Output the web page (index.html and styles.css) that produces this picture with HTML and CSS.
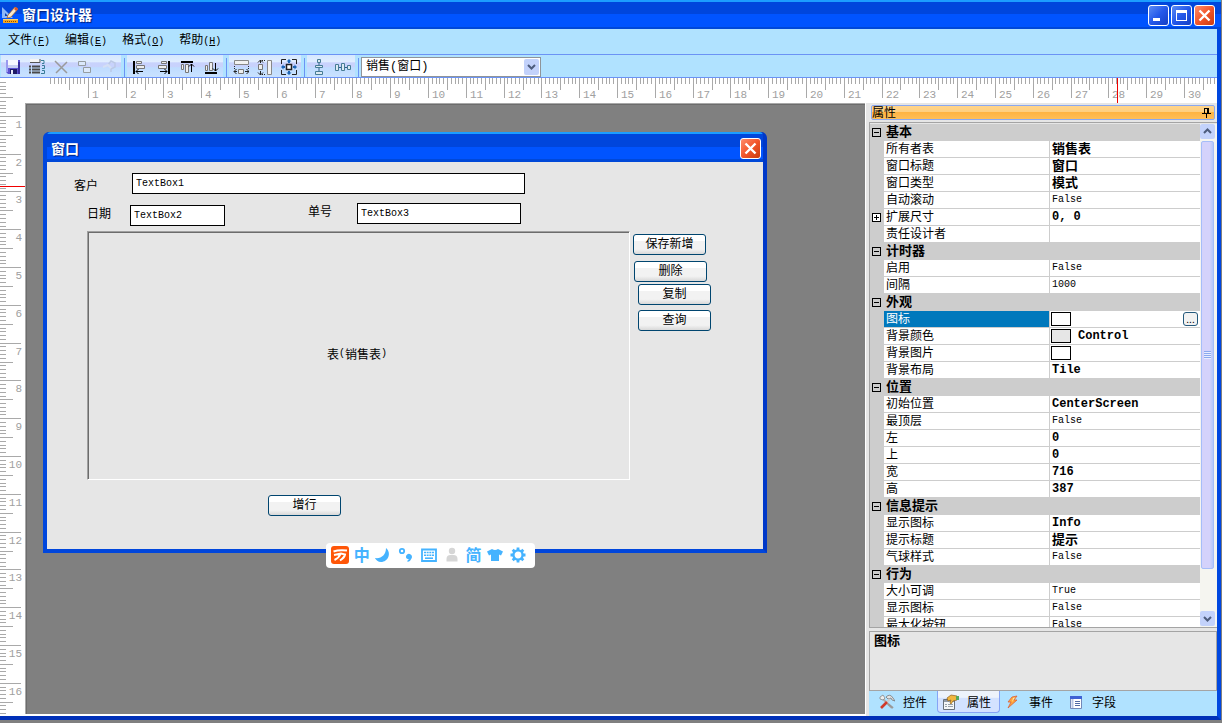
FILE: index.html
```html
<!DOCTYPE html>
<html lang="zh-CN">
<head>
<meta charset="utf-8">
<title>窗口设计器</title>
<link rel="stylesheet" href="styles.css">
</head>
<body>
<div class="app">
  <header class="titlebar">
    <svg class="title-icon" viewBox="0 0 16 16"><path d="M0 0l11 11H0z" fill="#8db8f8"/><path d="M3 6v3h3z" fill="#0a3fb0"/><path d="M5 11l1-3 7-8 3 2-7 8z" fill="#f8e8c8" stroke="#a85a1c" stroke-width=".7"/><path d="M12 2l2-2 2 2-2 2z" fill="#e0552c"/><path d="M1 12h15v4H1z" fill="#f5a623"/><path d="M1 12h15v1H1z" fill="#ffd56b"/><path d="M3.500 14v1M5.500 14v1M7.500 14v1M9.500 14v1M11.500 14v1M13.500 14v1" stroke="#8a4b00"/></svg>
    <h1 class="title-text">窗口设计器</h1>
    <div class="controls">
      <button class="ctl" aria-label="最小化"><svg viewBox="0 0 19 19"><path d="M4 12h7v3H4z" fill="#fff"/></svg></button>
      <button class="ctl" aria-label="最大化"><svg viewBox="0 0 19 19"><path d="M4 4h11v11H4zM5 7v7h9V7z" fill="#fff" fill-rule="evenodd"/></svg></button>
      <button class="ctl ctl-close" aria-label="关闭"><svg viewBox="0 0 19 19"><path d="M4.500 4.500l10 10M14.500 4.500l-10 10" stroke="#fff" stroke-width="2.400"/></svg></button>
    </div>
  </header>
  <div class="frame">
    <nav class="menubar">
      <button class="menu">文件<span class="latin">(<u>F</u>)</span></button>
      <button class="menu">编辑<span class="latin">(<u>E</u>)</span></button>
      <button class="menu">格式<span class="latin">(<u>O</u>)</span></button>
      <button class="menu">帮助<span class="latin">(<u>H</u>)</span></button>
    </nav>
    <div class="toolbar">
      <div class="strip">
        <button class="tool" aria-label="保存"><svg viewBox="0 0 16 16"><path d="M1 1h14v14H3l-2-2z" fill="#5a50d0"/><path d="M1 1h2v12H1z" fill="#9a9af0"/><path d="M13 3h2v12h-2z" fill="#3a2fa0"/><path d="M3 1h10v8H3z" fill="#f7f8ff"/><path d="M3 6h10v3H3z" fill="#c9cff2"/><path d="M5 10h7v5H5z" fill="#1d1a66"/><path d="M6 11h2v4H6z" fill="#e8e8f8"/></svg></button>
        <button class="tool" aria-label="标签顺序"><svg viewBox="0 0 16 16"><path d="M1 0h9v3H1z" fill="#f4f4f4"/><path d="M1 3.500h10V0" stroke="#555" fill="none"/><path d="M0 7.500h2M3 7.500h8M0 10.500h2M3 10.500h8M0 13.500h2M3 13.500h8" stroke="#4a4a4a" stroke-width="2"/><path d="M12 1.500h3v3h-2M13 6.500h2.500v3H13M13 11.500h2.500v3H12" stroke="#397c99" fill="none"/></svg></button>
        <button class="tool" aria-label="删除"><svg viewBox="0 0 16 16"><path d="M2 2l12 12M14 3L3 14" stroke="#9a9a9a" stroke-width="1.500"/></svg></button>
        <button class="tool" aria-label="层次"><svg viewBox="0 0 16 16"><path d="M1.500 2.500h7v4h-7zM6.500 8.500h7v5h-7z" fill="#dbe9fb" stroke="#959da0"/><path d="M3 8v3h2M10 4h2v3" stroke="#d5e4f4" fill="none"/></svg></button>
        <button class="tool" aria-label="帮助"><svg viewBox="0 0 16 16"><path d="M7 6l3-4 4 2v4l-4 2v3" stroke="#bcc9e6" fill="none" stroke-width="1.500"/><path d="M2 8l5-2 3 3" stroke="#d4dff4" fill="none" stroke-width="2"/></svg></button>
      </div>
      <i class="sep"></i>
      <div class="strip">
        <button class="tool" aria-label="左对齐"><svg viewBox="0 0 16 16"><path d="M3 2v13" stroke="#000" stroke-width="2"/><path d="M5.500 2.500h5v2h-5zM5.500 6.500h8v3h-8z" fill="#eee" stroke="#777"/><path d="M5 12.500h7M7.500 10l-2.500 2.500 2.500 2.500" stroke="#000" fill="none"/></svg></button>
        <button class="tool" aria-label="右对齐"><svg viewBox="0 0 16 16"><path d="M14 2v13" stroke="#000" stroke-width="2"/><path d="M6.500 2.500h5v2h-5zM3.500 6.500h8v3h-8z" fill="#eee" stroke="#777"/><path d="M5 12.500h7M9.500 10l2.500 2.500-2.500 2.500" stroke="#000" fill="none"/></svg></button>
        <button class="tool" aria-label="顶端对齐"><svg viewBox="0 0 16 16"><path d="M2 3h12" stroke="#000" stroke-width="2"/><path d="M2.500 5.500h2v5h-2zM6.500 5.500h3v8h-3z" fill="#eee" stroke="#777"/><path d="M12.500 5v8M10 7.500L12.500 5 15 7.500" stroke="#000" fill="none"/></svg></button>
        <button class="tool" aria-label="底端对齐"><svg viewBox="0 0 16 16"><path d="M2 14h12" stroke="#000" stroke-width="2"/><path d="M2.500 6.500h2v5h-2zM6.500 3.500h3v8h-3z" fill="#eee" stroke="#777"/><path d="M12.500 4v8M10 9.500l2.500 2.500L15 9.500" stroke="#000" fill="none"/></svg></button>
      </div>
      <i class="sep"></i>
      <div class="strip">
        <button class="tool" aria-label="相同宽度"><svg viewBox="0 0 16 16"><path d="M1.500 1.500h14v4h-14z" fill="#f2f2f2" stroke="#888"/><path d="M1.500 7v3M15.500 7v3" stroke="#222" stroke-dasharray="1 1"/><path d="M5.500 10.500h5v4h-5z" fill="#eee" stroke="#777"/><path d="M1 12.500h3M12 12.500h4M3.500 10L1 12.500 3.500 15M13.500 10l2.500 2.500-2.500 2.500" stroke="#222" fill="none"/></svg></button>
        <button class="tool" aria-label="相同高度"><svg viewBox="0 0 16 16"><path d="M10.500 1.500h4v14h-4z" fill="#f2f2f2" stroke="#888"/><path d="M5 1.500h4M5 15.500h4" stroke="#222" stroke-dasharray="1 1"/><path d="M1.500 5.500h4v5h-4z" fill="#eee" stroke="#777"/><path d="M3.500 1v3M3.500 12v4M1 3.500L3.500 1 6 3.500M1 13.500L3.500 16 6 13.500" stroke="#222" fill="none"/></svg></button>
        <button class="tool" aria-label="相同大小"><svg viewBox="0 0 16 16"><path d="M5 .5H.5V5M11 .5h4.500V5M.5 11v4.500H5M15.500 11v4.500H11" fill="none" stroke="#222"/><path d="M5.500 5.500h5v5h-5z" fill="#fff" stroke="#222" stroke-width="1.500"/><path d="M8 0l2.500 2.500H9V4H7V2.500H5.500zM8 16l2.500-2.500H9V12H7v1.500H5.500zM0 8l2.500-2.500V7H4v2H2.500v1.500zM16 8l-2.500-2.500V7H12v2h1.500v1.500z" fill="#1b65b5"/></svg></button>
      </div>
      <i class="sep"></i>
      <div class="strip">
        <button class="tool" aria-label="垂直居中"><svg viewBox="0 0 16 16"><path d="M8 0v16" stroke="#2f5f82"/><path d="M6.500.5h3v3h-3zM4.500 6.500h7v2h-7zM4.500 12.500h7v3h-7z" fill="#dceaf2" stroke="#467c95"/></svg></button>
        <button class="tool" aria-label="水平居中"><svg viewBox="0 0 16 16"><path d="M0 8.500h16" stroke="#2f5f82"/><path d="M.5 5.500h3v6h-3zM6.500 4.500h3v7h-3zM12.500 6.500h3v4h-3z" fill="#dceaf2" stroke="#467c95"/></svg></button>
      </div>
      <i class="sep"></i>
      <div class="combo">
        <select class="combo-select" aria-label="窗口选择"><option>销售(窗口)</option></select>
        <svg class="combo-arrow" viewBox="0 0 15 16"><path d="M4 6l3.500 3.500L11 6" fill="none" stroke="#4d5c7d" stroke-width="2"/></svg>
      </div>
    </div>
    <main class="work">
      <svg class="ruler-v" id="ruler-v"></svg>
      <div class="stage">
        <svg class="ruler-h" id="ruler-h"></svg>
        <div class="stage-row">
          <section class="canvas">
            <div class="form">
              <div class="form-title">
                <h2 class="form-caption">窗口</h2>
                <button class="ctl ctl-close" aria-label="关闭窗口"><svg viewBox="0 0 19 19"><path d="M4.500 4.500l10 10M14.500 4.500l-10 10" stroke="#fff" stroke-width="2.400"/></svg></button>
              </div>
              <div class="form-body">
                <label class="item lab-customer" for="t1">客户</label>
                <input class="item box-customer" id="t1" value="TextBox1">
                <label class="item lab-date" for="t2">日期</label>
                <input class="item box-date" id="t2" value="TextBox2">
                <label class="item lab-number" for="t3">单号</label>
                <input class="item box-number" id="t3" value="TextBox3">
                <div class="item sheet">表<span class="latin">(</span>销售表<span class="latin">)</span></div>
                <button class="item btn btn-save">保存新增</button>
                <button class="item btn btn-delete">删除</button>
                <button class="item btn btn-copy">复制</button>
                <button class="item btn btn-query">查询</button>
                <button class="item btn btn-row">增行</button>
              </div>
            </div>
            <div class="ime">
              <svg class="ime-icon" viewBox="0 0 18 18"><rect width="18" height="18" rx="3" fill="#ff5608"/><path d="M2.500 5.500Q8 3.500 16 4.500M3 9l7-1.500 4 1q-.5 3-5 6M9.500 8Q8 12 3.500 14" fill="none" stroke="#fff" stroke-width="2"/></svg>
              <span class="ime-text">中</span>
              <svg class="ime-icon" viewBox="0 0 18 18"><path d="M12 2c6 5 2 14-5 14-3 0-5-2-6-4 6 1 11-3 11-10z" fill="#45b3ff"/></svg>
              <svg class="ime-icon" viewBox="0 0 18 18"><circle cx="5" cy="5" r="2.200" fill="none" stroke="#45b3ff" stroke-width="1.800"/><path d="M9 11a3 3 0 1 1 5.500 1.500q-1 3-4 3.500v-1.500l1.500-1.500q-3 0-3-2z" fill="#45b3ff"/></svg>
              <svg class="ime-icon" viewBox="0 0 18 18"><path d="M2 3.500h14v11.500H2z" fill="none" stroke="#45b3ff" stroke-width="1.800"/><path d="M4 6.500h10M4 9.200h10" stroke="#45b3ff" stroke-width="1.600" stroke-dasharray="2 .66"/><path d="M5 12.200h8" stroke="#45b3ff" stroke-width="1.600"/></svg>
              <svg class="ime-icon" viewBox="0 0 18 18"><circle cx="9" cy="5" r="3.200" fill="#d6d6d6"/><path d="M3.500 15.500V13q0-4 4-4h3q4 0 4 4v2.500z" fill="#d6d6d6"/></svg>
              <span class="ime-text">简</span>
              <svg class="ime-icon" viewBox="0 0 18 18"><path d="M6 3q3 2 6 0l5 2.500-2 4-2-1V15H5V8.500l-2 1-2-4z" fill="#45b3ff"/></svg>
              <svg class="ime-icon" viewBox="0 0 18 18"><circle cx="9" cy="9" r="4.600" fill="none" stroke="#45b3ff" stroke-width="2.400"/><path d="M9 1.500V5M9 13v3.500M1.500 9H5M13 9h3.500M3.700 3.700l2 2M12.300 12.300l2 2M14.300 3.700l-2 2M3.700 14.300l2-2" stroke="#45b3ff" stroke-width="2.800"/></svg>
            </div>
          </section>
          <aside class="side">
            <div class="side-head"><span>属性</span><svg class="pin" viewBox="0 0 9 11"><path d="M2 1.500h5M2.500 1v5M5.500 1v5M6.500 1v5M0 6.500h9M4.500 7v4" stroke="#000" fill="none"/></svg></div>
            <div class="grid-box">
              <table class="grid">
                <tbody>
                <tr class="cat"><td><button class="exp" aria-label="折叠"></button></td><th colspan="2">基本</th></tr>
                <tr><td></td><td>所有者表</td><td class="b">销售表</td></tr>
                <tr><td></td><td>窗口标题</td><td class="b">窗口</td></tr>
                <tr><td></td><td>窗口类型</td><td class="b">模式</td></tr>
                <tr><td></td><td>自动滚动</td><td class="v">False</td></tr>
                <tr><td><button class="exp exp-plus" aria-label="展开"></button></td><td>扩展尺寸</td><td class="vb">0, 0</td></tr>
                <tr><td></td><td>责任设计者</td><td></td></tr>
                <tr class="cat"><td><button class="exp" aria-label="折叠"></button></td><th colspan="2">计时器</th></tr>
                <tr><td></td><td>启用</td><td class="v">False</td></tr>
                <tr><td></td><td>间隔</td><td class="v">1000</td></tr>
                <tr class="cat"><td><button class="exp" aria-label="折叠"></button></td><th colspan="2">外观</th></tr>
                <tr class="sel"><td></td><td>图标</td><td class="sw"><i class="swatch"></i><button class="more" aria-label="浏览">...</button></td></tr>
                <tr><td></td><td>背景颜色</td><td class="vb sw"><i class="swatch swatch-gray"></i>Control</td></tr>
                <tr><td></td><td>背景图片</td><td class="sw"><i class="swatch"></i></td></tr>
                <tr><td></td><td>背景布局</td><td class="vb">Tile</td></tr>
                <tr class="cat"><td><button class="exp" aria-label="折叠"></button></td><th colspan="2">位置</th></tr>
                <tr><td></td><td>初始位置</td><td class="vb">CenterScreen</td></tr>
                <tr><td></td><td>最顶层</td><td class="v">False</td></tr>
                <tr><td></td><td>左</td><td class="vb">0</td></tr>
                <tr><td></td><td>上</td><td class="vb">0</td></tr>
                <tr><td></td><td>宽</td><td class="vb">716</td></tr>
                <tr><td></td><td>高</td><td class="vb">387</td></tr>
                <tr class="cat"><td><button class="exp" aria-label="折叠"></button></td><th colspan="2">信息提示</th></tr>
                <tr><td></td><td>显示图标</td><td class="vb">Info</td></tr>
                <tr><td></td><td>提示标题</td><td class="b">提示</td></tr>
                <tr><td></td><td>气球样式</td><td class="v">False</td></tr>
                <tr class="cat"><td><button class="exp" aria-label="折叠"></button></td><th colspan="2">行为</th></tr>
                <tr><td></td><td>大小可调</td><td class="v">True</td></tr>
                <tr><td></td><td>显示图标</td><td class="v">False</td></tr>
                <tr><td></td><td>最大化按钮</td><td class="v">False</td></tr>
                </tbody>
              </table>
              <div class="scroll">
                <button class="scroll-btn" aria-label="向上滚动"><svg viewBox="0 0 15 15"><path d="M4 9l3.500-3.500L11 9" fill="none" stroke="#4d5c7d" stroke-width="2"/></svg></button>
                <div class="track"><div class="thumb"><i class="grip"></i></div></div>
                <button class="scroll-btn" aria-label="向下滚动"><svg viewBox="0 0 15 15"><path d="M4 6l3.500 3.500L11 6" fill="none" stroke="#4d5c7d" stroke-width="2"/></svg></button>
              </div>
            </div>
            <div class="hint">图标</div>
            <div class="tabs">
              <button class="tab"><svg viewBox="0 0 16 16"><path d="M3 4l10 10" stroke="#aaa" stroke-width="2"/><path d="M1 3l3-2 2 3-2 2-3-1z" fill="#eee" stroke="#888" stroke-width=".8"/><path d="M7 3q4-4 7 1l2 3-3-1-1-2-3 1z" fill="#e4e4e4" stroke="#777" stroke-width=".8"/><path d="M11 5L7 9" stroke="#ccc" stroke-width="2"/><path d="M8 8l-6 6" stroke="#d03a2a" stroke-width="2.600"/><path d="M9 10l5 4" stroke="#999" stroke-width="2"/></svg>控件</button>
              <button class="tab tab-on"><svg viewBox="0 0 16 16"><path d="M.5 5.500h11v10H.5z" fill="#f4f6f8" stroke="#68707a"/><path d="M1 6h10v2H1z" fill="#909aa8"/><path d="M2 10h2v1H2zM5 10h5v1H5zM2 12h2v1H2zM5 12h5v1H5z" fill="#98a0a8"/><path d="M4 4l4-3 6 1v4l-4 1-2 3-1-1 1-3-3 1z" fill="#f1b63e" stroke="#8f601e" stroke-width=".7"/><path d="M13 2h3v4h-3z" fill="#55a85c"/></svg>属性</button>
              <button class="tab"><svg viewBox="0 0 16 16"><path d="M7 3l5-1-3 4h3L3 14l3-6H3z" fill="#ffa63b" stroke="#d9603a" stroke-width=".8"/><path d="M8 4l2-.5L7 8z" fill="#ffe9a5"/></svg>事件</button>
              <button class="tab"><svg viewBox="0 0 16 16"><path d="M2.500 2.500h11v12h-11z" fill="#fff" stroke="#7288b8"/><path d="M2 2h12v3H2z" fill="#3e62d4"/><path d="M4.500 5v9" stroke="#b8c6e4" stroke-width="2"/><path d="M7 7.500h5M7 9.500h5M7 11.500h5" stroke="#516aa5"/></svg>字段</button>
            </div>
          </aside>
        </div>
      </div>
    </main>
  </div>
</div>
<script src="rulers.js"></script>
</body>
</html>
```
FILE: styles.css
```css
* { box-sizing: border-box; }
body { margin: 0; background: #808080; color: #000; font: 12px/16px "Noto Sans CJK SC", sans-serif; }
button { font: inherit; color: inherit; padding: 0; border: 0; background: none; }
svg { display: block; }
h1, h2 { margin: 0; padding-bottom: 1px; font-size: 14px; font-weight: 700; color: #fff; text-shadow: 1px 1px 1px #00207a; }
.latin { font-family: "Liberation Mono", monospace; font-size: 10px; }

.app { height: calc(100vh - 3px); margin-right: 1px; display: flex; flex-direction: column; }
.titlebar, .form-title { background: linear-gradient(#1c9dff 0 2px, #0046dc 2px 50%, #0054ff 50% 27px, #0048d8 27px); display: flex; align-items: center; }
.titlebar { height: 29px; padding: 0 6px 0 2px; gap: 4px; }
.title-icon { width: 16px; height: 16px; }
.title-text { flex: 1; }
.controls { display: flex; gap: 2px; padding-top: 2px; }
.ctl { width: 21px; height: 21px; border: 1px solid #fff; border-radius: 3px; background: linear-gradient(135deg, #5b8cf5, #2458ea 50%, #1540c4); }
.ctl svg { width: 19px; height: 19px; }
.ctl-close { background: linear-gradient(135deg, #ff8d6c, #f2552a 50%, #c83c10); }

.frame { flex: 1; min-height: 0; display: flex; flex-direction: column; border: solid #0047e0; border-width: 0 4px 4px 0; border-bottom-color: #0030b8; background: #b0e2ff; }
.menubar { height: 25px; display: flex; gap: 15px; padding: 0 0 2px 8px; align-items: center; }
.menu { white-space: nowrap; }
.toolbar { height: 24px; display: flex; align-items: stretch; padding: 0 1px; border: solid #6b93f5; border-width: 1px 0; }
.strip { display: flex; padding-top: 1px; background: linear-gradient(#d5e8ff, #e0edff 30%, #c8d2fc 36% 52%, #bfdcff 58%, #c9e2ff); }
.tool { width: 24px; height: 22px; display: grid; place-items: center; }
.tool svg { width: 16px; height: 16px; }
.sep { width: 1px; margin: 3px 2px 0 3px; background: #6b93f5; }
.combo { position: relative; width: 180px; margin-top: 2px; }
.combo-select { appearance: none; width: 100%; height: 20px; border: 1px solid #8f9499; border-radius: 0; background: #fff; padding: 0 20px 0 4px; font: 12px/18px "Liberation Mono", "Noto Sans CJK SC", monospace; color: #000; }
.combo-arrow { position: absolute; right: 2px; top: 2px; width: 15px; height: 16px; background: #c3d2fb; border-radius: 2px; pointer-events: none; }

.work { flex: 1; min-height: 0; display: flex; background: #fff; }
.ruler-v { width: 25px; height: 100%; flex: none; }
.ruler-h { width: 100%; height: 25px; flex: none; }
.stage { flex: 1; min-width: 0; display: flex; flex-direction: column; }
.stage-row { flex: 1; min-height: 0; display: flex; }
.tick { stroke: #a9a9a9; }
.mark { stroke: #f00000; }
.num { fill: #a0a0a0; font: 11px "Liberation Mono", monospace; }

.canvas { position: relative; flex: 1; min-width: 0; margin-bottom: 2px; background: #808080; border: solid #a8a8a8; border-width: 1px 0 0 1px; box-shadow: inset 1px 1px #6c6c6c; overflow: hidden; }
.form { position: absolute; left: 17px; top: 28px; border: solid #0046dc; border-width: 0 4px 4px; border-right-color: #0038c8; border-radius: 6px 6px 0 0; background: #0046dc; box-shadow: inset 0 -1px #0050f0; }
.form-title { height: 30px; padding: 2px 2px 0 4px; border-radius: 4px 4px 0 0; justify-content: space-between; }
.form-body { position: relative; width: 716px; height: 387px; background: #e6e6e6; }
.item { position: absolute; }
input.item { height: 21px; border: 1px solid #000; padding: 0 3px; background: #fff; color: #000; font: 10px "Liberation Mono", monospace; }
.lab-customer { left: 27px; top: 15px; }
.lab-date { left: 40px; top: 43px; }
.lab-number { left: 261px; top: 41px; }
.box-customer { left: 85px; top: 11px; width: 393px; }
.box-date { left: 83px; top: 43px; width: 95px; }
.box-number { left: 310px; top: 41px; width: 164px; }
.sheet { left: 40px; top: 69px; width: 543px; height: 249px; padding: 0 3px 4px 0; display: flex; align-items: center; justify-content: center; border: 1px solid #a0a0a0; border-right-color: #fff; border-bottom-color: #fff; box-shadow: inset 1px 1px #6c6c6c; }
.btn { width: 73px; height: 21px; padding-bottom: 4px; line-height: 14px; border: 1px solid #00456f; border-radius: 3px; background: linear-gradient(#fff 0 30%, #f2f2f2 31% 75%, #d8d8d8); }
.btn-save { left: 586px; top: 72px; }
.btn-delete { left: 587px; top: 99px; }
.btn-copy { left: 591px; top: 122px; }
.btn-query { left: 591px; top: 148px; }
.btn-row { left: 221px; top: 333px; }
.ime { position: absolute; left: 300px; top: 439px; width: 209px; height: 25px; padding: 0 8px 2px 5px; display: flex; align-items: center; justify-content: space-between; background: #fff; border-radius: 4px; }
.ime-icon { width: 18px; height: 18px; }
.ime-text { padding-bottom: 2px; font-size: 16px; line-height: 18px; font-weight: 700; color: #45b3ff; }

.side { width: 352px; flex: none; display: flex; flex-direction: column; padding: 2px 0 0 3px; border-left: 1px solid #fff; background: #e6e6e6; }
.side-head { height: 15px; margin: 0 2px 2px 2px; padding: 0 3px 0 0; display: flex; align-items: center; justify-content: space-between; border: 1px solid #8aa8f0; border-radius: 2px; background: linear-gradient(#ffd48a, #ffcf80 45%, #ffb443 50%, #ffbe58); }
.side-head span { height: 13px; line-height: 11px; }
.pin { width: 9px; height: 11px; }
.grid-box { flex: 1; min-height: 0; display: flex; padding-top: 1px; border: 1px solid #a4a4a4; border-right: 0; overflow: hidden; }
.grid { display: block; flex: 1; min-width: 0; border-spacing: 0; overflow: hidden; }
.grid tbody { display: block; }
.grid tr { display: grid; grid-template-columns: 14px 166px 1fr; height: 17px; background: #fff; }
.grid td, .grid th { padding: 0 2px; line-height: 13px; height: 17px; border-bottom: 1px solid #cdcdcd; white-space: nowrap; overflow: hidden; text-align: left; }
.grid td:first-child { padding: 4px 0 0 2px; background: #cdcdcd; }
.grid td:nth-child(2) { border-right: 1px solid #cdcdcd; }
.grid .cat { background: #cdcdcd; }
.grid th { grid-column: 2 / 4; font-size: 13px; font-weight: 700; }
.grid .b { font-size: 13px; font-weight: 700; }
.grid .v { font: 10px/16px "Liberation Mono", monospace; }
.grid .vb { font: bold 12px/16px "Liberation Mono", monospace; }
.grid .sel td:nth-child(2) { background: #0078bc; color: #fff; }
.grid .sw { display: flex; align-items: center; gap: 7px; padding: 0 2px 0 1px; }
.swatch { width: 20px; height: 14px; border: 1px solid #000; background: #fff; }
.swatch-gray { background: #e6e6e6; }
.more { width: 15px; height: 14px; margin-left: auto; border: 1px solid #24597c; border-radius: 3px; background: #f2f2f2; font-size: 10px; line-height: 8px; }
.exp { display: block; width: 9px; height: 9px; border: 1px solid #000; background: linear-gradient(#000, #000) center / 5px 1px no-repeat; }
.exp-plus { background: linear-gradient(#000, #000) center / 5px 1px no-repeat, linear-gradient(#000, #000) center / 1px 5px no-repeat, #fff; }
.scroll { width: 17px; padding: 0 2px 1px 0; display: flex; flex-direction: column; background: #f5f5f0; }
.scroll-btn { height: 15px; border-radius: 2px; background: #c3d2fb; }
.scroll-btn svg { width: 15px; height: 15px; }
.track { flex: 1; padding: 2px 1px 0 1px; }
.thumb { height: 91%; display: grid; place-items: center; border: 1px solid #a6bdf8; border-radius: 2px; background: linear-gradient(90deg, #d4d2fb 0 70%, #b4c8fb); }
.grip { width: 7px; height: 8px; background: repeating-linear-gradient(#8ba9ee 0 1px, #e8edff 1px 2px); }
.hint { height: 60px; margin-top: 3px; padding: 0 4px; border: 1px solid #a4a4a4; font-size: 13px; font-weight: 700; }
.tabs { height: 25px; display: flex; padding-left: 5px; background: #b0e2ff; }
.tab { width: 63px; height: 22px; display: flex; align-items: center; gap: 8px; padding-left: 5px; white-space: nowrap; }
.tab svg { width: 16px; height: 16px; flex: none; }
.tab-on { border: 1px solid #86a4f5; border-top: 0; border-radius: 0 0 4px 4px; background: linear-gradient(#edf3fb 30%, #d3e2ff 35%); }
```
FILE: rulers.js
```javascript
// Centimetre rulers: a short tick per millimetre, longer ones per half and whole centimetre.
const CM = 37.795;

function add(svg, name, attrs, text) {
  const el = document.createElementNS('http://www.w3.org/2000/svg', name);
  for (const key in attrs) el.setAttribute(key, attrs[key]);
  if (text) el.textContent = text;
  svg.appendChild(el);
}

function draw(id, origin, vertical, marker) {
  const svg = document.getElementById(id);
  const box = svg.getBoundingClientRect();
  const size = vertical ? box.height : box.width;
  svg.replaceChildren();
  const line = (p, len, cls) => add(svg, 'line', vertical
    ? { x1: 0, x2: len, y1: p, y2: p, class: cls }
    : { x1: p, x2: p, y1: 0, y2: len, class: cls });
  for (let i = vertical ? 1 : 0; origin + i * CM / 10 < size - 1; i++) {
    const p = Math.floor(origin + i * CM / 10) + 0.5;
    const whole = i > 0 && i % 10 === 0;
    const half = i % 10 === 5;
    line(p, whole ? (vertical ? 21 : 20) : half ? (vertical ? 13 : 12) : 6, 'tick');
    if (whole && p + 16 < size) {
      add(svg, 'text', vertical
        ? { x: 22, y: p + 11.5, 'text-anchor': 'end', class: 'num' }
        : { x: p + 3.5, y: 20, class: 'num' }, String(i / 10));
    }
  }
  line(marker, 25, 'mark');
}

function drawAll() {
  draw('ruler-h', 25.6, false, 1092.5);
  draw('ruler-v', 0.6, true, 108.5);
}

drawAll();
window.addEventListener('resize', drawAll);
```
